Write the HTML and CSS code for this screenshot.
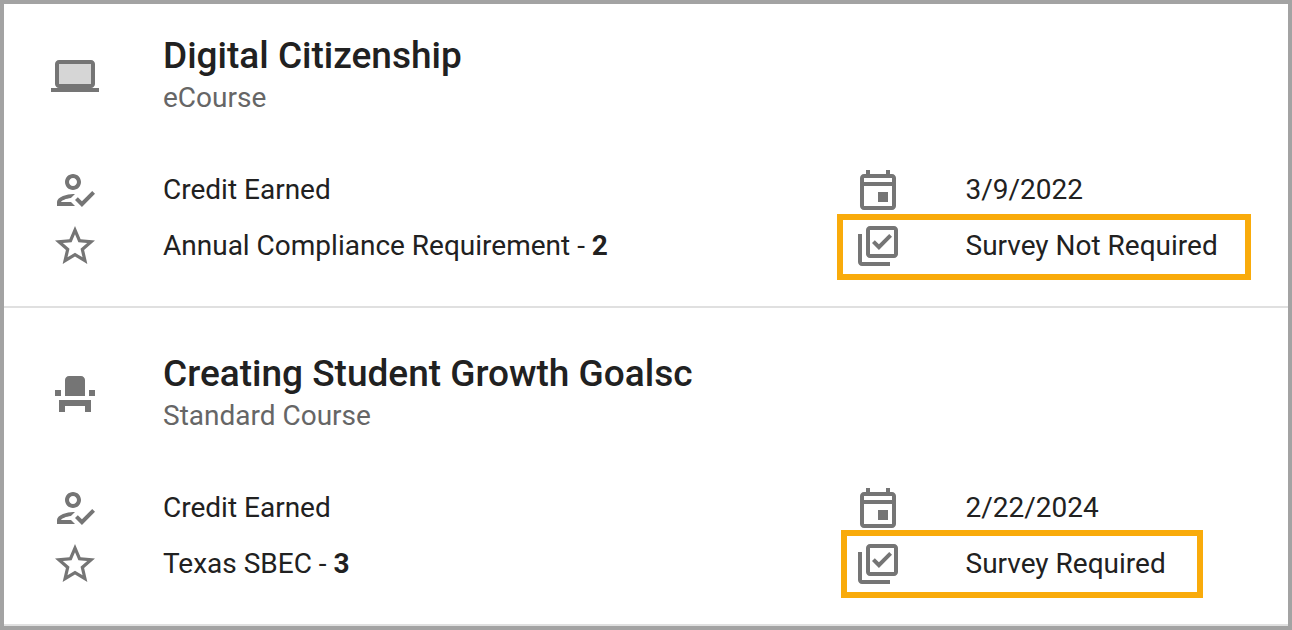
FILE: index.html
```html
<!DOCTYPE html>
<html lang="en">
<head>
    <meta charset="UTF-8">
    <meta name="viewport" content="width=device-width, initial-scale=1.0">
    <title>Transcript</title>
    <link rel="stylesheet" href="styles.css">
</head>
<body>
    <!-- icons used by the course cards -->
    <svg class="sprite" aria-hidden="true">
        <symbol id="icon-laptop" viewBox="0 0 24 24">
            <path fill="#d6d6d6" d="M4 6h16v10H4z"/>
            <path d="M20 18c1.1 0 2-.9 2-2V6c0-1.1-.9-2-2-2H4c-1.1 0-2 .9-2 2v10c0 1.1.9 2 2 2H0v2h24v-2h-4zM4 6h16v10H4V6z"/>
        </symbol>
        <symbol id="icon-seat" viewBox="0 0 24 24">
            <path d="M4 18v3h3v-3h10v3h3v-6H4zM19 10h3v3h-3zM2 10h3v3H2zM17 13H7V5c0-1.1.9-2 2-2h6c1.1 0 2 .9 2 2v8z"/>
        </symbol>
        <symbol id="icon-credit" viewBox="0 0 24 24">
            <path d="M11 12c2.21 0 4-1.79 4-4s-1.79-4-4-4-4 1.79-4 4 1.79 4 4 4zm0-6c1.1 0 2 .9 2 2s-.9 2-2 2-2-.9-2-2 .9-2 2-2zM5 18c.2-.63 2.57-1.68 4.96-1.94l2.04-2c-.39-.04-.68-.06-1-.06-2.67 0-8 1.34-8 4v2h9l-2-2H5zm15.6-5.5l-5.13 5.17-2.07-2.08L12 17l3.47 3.5L22 13.91z"/>
        </symbol>
        <symbol id="icon-star" viewBox="0 0 24 24">
            <path d="M22 9.24l-7.19-.62L12 2 9.19 8.63 2 9.24l5.46 4.73L5.82 21 12 17.27 18.18 21l-1.63-7.03L22 9.24zM12 15.4l-3.76 2.27 1-4.28-3.32-2.88 4.38-.38L12 6.1l1.71 4.04 4.38.38-3.32 2.88 1 4.28L12 15.4z"/>
        </symbol>
        <symbol id="icon-event" viewBox="0 0 24 24">
            <path d="M19 4h-1V2h-2v2H8V2H6v2H5c-1.11 0-1.99.9-1.99 2L3 20c0 1.1.89 2 2 2h14c1.1 0 2-.9 2-2V6c0-1.1-.9-2-2-2zm0 16H5V10h14v10zm0-12H5V6h14v2zM12 13h5v5h-5z"/>
        </symbol>
        <symbol id="icon-survey" viewBox="0 0 24 24">
            <path d="M20 2H8c-1.1 0-2 .9-2 2v12c0 1.1.9 2 2 2h12c1.1 0 2-.9 2-2V4c0-1.1-.9-2-2-2zm0 14H8V4h12v12zm-7.53-2L9 10.5l1.4-1.41 2.07 2.08L17.6 6 19 7.41 12.47 14zM4 6H2v14c0 1.1.9 2 2 2h14v-2H4V6z"/>
        </symbol>
    </svg>

    <main class="transcript">
        <article class="course">
            <header class="course-header">
                <svg class="icon" aria-hidden="true"><use href="#icon-laptop"/></svg>
                <div>
                    <h2 class="course-title">Digital Citizenship</h2>
                    <p class="course-type">eCourse</p>
                </div>
            </header>
            <div class="details">
                <div class="detail">
                    <svg class="icon" aria-hidden="true"><use href="#icon-credit"/></svg>
                    <span>Credit Earned</span>
                </div>
                <div class="detail">
                    <svg class="icon" aria-hidden="true"><use href="#icon-event"/></svg>
                    <span>3/9/2022</span>
                </div>
                <div class="detail">
                    <svg class="icon" aria-hidden="true"><use href="#icon-star"/></svg>
                    <span>Annual Compliance Requirement - <b>2</b></span>
                </div>
                <div class="detail highlight highlight-wide">
                    <svg class="icon" aria-hidden="true"><use href="#icon-survey"/></svg>
                    <span>Survey Not Required</span>
                </div>
            </div>
        </article>

        <article class="course">
            <header class="course-header">
                <svg class="icon" aria-hidden="true"><use href="#icon-seat"/></svg>
                <div>
                    <h2 class="course-title">Creating Student Growth Goalsc</h2>
                    <p class="course-type">Standard Course</p>
                </div>
            </header>
            <div class="details">
                <div class="detail">
                    <svg class="icon" aria-hidden="true"><use href="#icon-credit"/></svg>
                    <span>Credit Earned</span>
                </div>
                <div class="detail">
                    <svg class="icon" aria-hidden="true"><use href="#icon-event"/></svg>
                    <span>2/22/2024</span>
                </div>
                <div class="detail">
                    <svg class="icon" aria-hidden="true"><use href="#icon-star"/></svg>
                    <span>Texas SBEC - <b>3</b></span>
                </div>
                <div class="detail highlight">
                    <svg class="icon" aria-hidden="true"><use href="#icon-survey"/></svg>
                    <span>Survey Required</span>
                </div>
            </div>
        </article>
    </main>
</body>
</html>
```
FILE: styles.css
```css
* {
    box-sizing: border-box;
}
body {
    margin: 0;
    font-family: Roboto, "Liberation Sans", sans-serif;
    font-size: 28px;
    color: #212121;
    background: white;
}
.sprite {
    display: none;
}
.transcript {
    min-height: 100vh;
    border: 4px solid #a3a3a3;
}
.course {
    padding: 46px 0 32px;
    border-bottom: 2px solid #e0e0e0;
}
.course:first-child {
    padding-top: 32px;
}
.course-header {
    display: flex;
    gap: 64px;
    padding-left: 47px;
    margin-bottom: 42px;
}
.course-header .icon {
    margin-top: 16px;
}
.course-title {
    margin: 0;
    font-size: 37px;
    font-weight: 500;
    line-height: 40px;
}
.course-type {
    margin: 0;
    line-height: 44px;
    color: #666;
}
.icon {
    flex: none;
    width: 48px;
    height: 48px;
    fill: #757575;
}
.details {
    display: grid;
    grid-template-columns: 5fr 3fr;
}
.detail {
    position: relative;
    display: flex;
    align-items: center;
    gap: 64px;
    height: 56px;
    margin-left: 47px;
    white-space: nowrap;
}
.detail span {
    padding-bottom: 2px;
}
.detail b {
    font-weight: 700;
}
/* orange callout around the survey status */
.highlight {
    justify-self: start;
}
.highlight::after {
    content: "";
    position: absolute;
    inset: -6px -37px -6px -13px;
    border: 6px solid #f9ab0b;
}
.highlight-wide::after {
    inset: -4px -33px -6px -17px;
}
```
